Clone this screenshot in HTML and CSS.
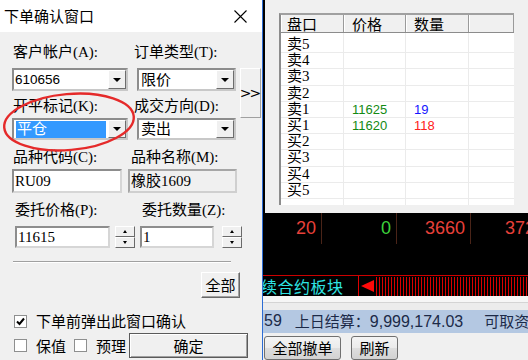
FILE: index.html
```html
<!DOCTYPE html>
<html lang="zh-CN">

<head>
    <meta charset="UTF-8">
    <meta name="viewport" content="width=device-width">
    <title>下单确认窗口</title>
    <link rel="stylesheet" href="styles.css">
</head>

<body>
    <div class="dlg">
        <div class="titlebar">
            <span>下单确认窗口</span>
            <svg class="close" width="13" height="13" viewBox="0 0 13 13">
                <path d="M0.5 0.5 L12.5 12.5 M12.5 0.5 L0.5 12.5" stroke="#000" stroke-width="1.1" fill="none" />
            </svg>
        </div>
        <div class="pane">
            <!-- les deux lignes de listes + le bouton >> -->
            <div class="top">
                <label class="l1">客户帐户(A):</label>
                <label class="l2">订单类型(T):</label>
                <div class="combo s1"><span class="num">610656</span><i class="drop"></i></div>
                <div class="combo s2"><span>限价</span><i class="drop"></i></div>
                <div class="btn more">&gt;&gt;</div>
                <label class="l3">开平标记(K):</label>
                <label class="l4">成交方向(D):</label>
                <div class="combo s3"><span class="sel">平仓</span><i class="drop"></i></div>
                <div class="combo s4"><span>卖出</span><i class="drop"></i></div>
            </div>

            <div class="lbl-row r3">
                <label class="w117">品种代码(C):</label>
                <label>品种名称(M):</label>
            </div>
            <div class="in-row r3i">
                <div class="box w110">RU09</div>
                <div class="box ro w109">橡胶1609</div>
            </div>

            <div class="lbl-row r4">
                <label class="w127">委托价格(P):</label>
                <label>委托数量(Z):</label>
            </div>
            <div class="in-row r4i">
                <div class="box price">11615</div>
                <div class="spin"><i class="spb up"></i><i class="spb down"></i></div>
                <div class="box qty">1</div>
                <div class="spin"><i class="spb up"></i><i class="spb down"></i></div>
            </div>

            <div class="sep"></div>
            <div class="btn all">全部</div>

            <div class="chk-row">
                <span class="chk on">
                    <svg width="11" height="11" viewBox="0 0 11 11">
                        <path d="M2 5.5 L4.5 8 L9 2.5" stroke="#000" stroke-width="2" fill="none" />
                    </svg>
                </span>
                <span class="txt">下单前弹出此窗口确认</span>
            </div>
            <div class="last-row">
                <span class="chk"></span>
                <span class="txt">保值</span>
                <span class="chk c2"></span>
                <span class="txt">预理</span>
                <div class="btn ok">确定</div>
            </div>
        </div>

        <!-- le cercle rouge par-dessus -->
        <svg class="ring" width="144" height="72" viewBox="0 0 144 72">
            <ellipse cx="69" cy="34" rx="65" ry="28" transform="rotate(-5 69 34)" fill="none" stroke="#e52a2a"
                stroke-width="2.4" />
        </svg>
    </div>

    <div class="side">
        <div class="quote">
            <div class="book">
                <div class="bhead"><span>盘口</span><span>价格</span><span>数量</span><span></span></div>
                <div class="bbody">
                    <div class="brow"><span>卖5</span><span></span><span></span><span></span></div>
                    <div class="brow"><span>卖4</span><span></span><span></span><span></span></div>
                    <div class="brow"><span>卖3</span><span></span><span></span><span></span></div>
                    <div class="brow"><span>卖2</span><span></span><span></span><span></span></div>
                    <div class="brow"><span>卖1</span><span class="px">11625</span><span class="px blue">19</span><span></span></div>
                    <div class="brow"><span>买1</span><span class="px">11620</span><span class="px red">118</span><span></span></div>
                    <div class="brow"><span>买2</span><span></span><span></span><span></span></div>
                    <div class="brow"><span>买3</span><span></span><span></span><span></span></div>
                    <div class="brow"><span>买4</span><span></span><span></span><span></span></div>
                    <div class="brow"><span>买5</span><span></span><span></span><span></span></div>
                </div>
            </div>
        </div>

        <div class="ticker">
            <div class="cells">
                <span class="c w59 dn">20</span>
                <span class="c w75 eq">0</span>
                <span class="c w74 dn">3660</span>
                <span class="c last dn">372</span>
            </div>
        </div>

        <div class="bar">
            <span class="blk">续合约板块</span>
            <span class="scroll"><i class="tri"></i><span class="stripes"></span></span>
        </div>

        <div class="edge"></div>

        <div class="status">
            <span class="n">59</span>
            <span class="settle">上日结算：<span class="n">9,999,174.03</span></span>
            <span class="avail">可取资</span>
        </div>

        <div class="actions">
            <div class="wbtn b1">全部撤单</div>
            <div class="wbtn b2">刷新</div>
        </div>
    </div>
</body>

</html>
```

FILE: styles.css
```css
* {
    box-sizing: border-box;
}

body {
    margin: 0;
    width: 528px;
    height: 360px;
    overflow: hidden;
    display: flex;
    background: #000;
    font-family: "Liberation Serif", "Noto Sans CJK SC", serif;
    font-size: 15px;
    line-height: 16px;
    color: #000;
}

/*********************/
/* La fenêtre de gauche */
/*********************/
.dlg {
    position: relative;
    flex: none;
    width: 263px;
    border-right: 1px solid #2c6cd4;
    background: #f0f0f0;
}

.titlebar {
    height: 32px;
    display: flex;
    align-items: center;
    padding-left: 4px;
    background: #fff;
    font-family: "Noto Sans CJK SC", sans-serif;
    font-size: 15px;
}

.titlebar .close {
    margin-left: auto;
    margin-right: 15px;
}

.pane {
    padding: 12px 0 0 12px;
}

.top {
    display: grid;
    grid-template-columns: 116px 9px 99px 4px 21px;
    grid-template-rows: 24px 23px 27px 22px;
    grid-template-areas:
        "l1 . l2 . ."
        "s1 . s2 . more"
        "l3 . l4 . more"
        "s3 . s4 . .";
}

.l1 { grid-area: l1; margin-left: 1px; }
.l2 { grid-area: l2; margin-left: -3px; white-space: nowrap; }
.l3 { grid-area: l3; margin-left: 1px; padding-top: 7px; }
.l4 { grid-area: l4; margin-left: -3px; padding-top: 7px; white-space: nowrap; }
.s1 { grid-area: s1; }
.s2 { grid-area: s2; }
.s3 { grid-area: s3; }
.s4 { grid-area: s4; }
.more { grid-area: more; }

label {
    white-space: nowrap;
}

/* liste déroulante façon Windows */
.combo {
    display: flex;
    align-items: center;
    background: #fff;
    border: 2px solid;
    border-color: #8d8d8d #c8c8c8 #c8c8c8 #8d8d8d;
    padding-left: 2px;
}

.combo > span {
    flex: 1;
}

.combo .num {
    margin-left: -1px;
    font-family: "Liberation Sans", sans-serif;
    font-size: 13.5px;
}

.combo .sel {
    flex: 0 0 90px;
    height: 17px;
    margin-right: auto;
    padding-left: 1px;
    background: #3399ff;
    color: #fff;
    line-height: 17px;
}

.drop {
    width: 18px;
    align-self: stretch;
    display: flex;
    align-items: center;
    justify-content: center;
    background: #f0f0f0;
    border: 1px solid;
    border-color: #fff #6d6d6d #6d6d6d #fff;
}

.drop::after {
    content: '';
    border-left: 4px solid transparent;
    border-right: 4px solid transparent;
    border-top: 4px solid #000;
}

/* bouton en relief */
.btn {
    display: flex;
    align-items: center;
    justify-content: center;
    background: #f0f0f0;
    border: 1px solid;
    border-color: #fff #6a6a6a #6a6a6a #fff;
    box-shadow: inset -1px -1px #a0a0a0;
    font-family: "Noto Sans CJK SC", sans-serif;
}

.more {
    font-family: "DejaVu Sans", sans-serif;
    font-size: 14px;
    letter-spacing: -2px;
    padding-right: 2px;
    border-color: #fff #a0a0a0 #a0a0a0 #fff;
    box-shadow: none;
}

.lbl-row {
    display: flex;
    height: 16px;
    margin-top: 9px;
}

.w117 { width: 118px; margin-left: 1px; }
.w127 { width: 127px; margin-left: 3px; }

.in-row {
    display: flex;
}

.r3i {
    height: 24px;
    margin-top: 4px;
}

.r4i {
    height: 22px;
    margin-top: 8px;
}

.box {
    display: flex;
    align-items: center;
    padding-left: 1px;
    background: #fff;
    border: 2px solid;
    border-color: #8d8d8d #d6d6d6 #d6d6d6 #8d8d8d;
}

.box.ro {
    background: #f0f0f0;
    border-color: #a6a6a6 #cfcfcf #cfcfcf #a6a6a6;
}

.w110 { width: 110px; }
.w109 { width: 109px; margin-left: 6px; }

.price { width: 95px; margin-left: 3px; }
.qty { width: 74px; margin-left: 5px; }

.spin {
    width: 20px;
    margin-left: 5px;
    display: flex;
    flex-direction: column;
}

.qty + .spin {
    margin-left: 8px;
}

.spb {
    flex: 1;
    display: flex;
    align-items: center;
    justify-content: center;
    background: #f0f0f0;
    border: 1px solid;
    border-color: #fff #6a6a6a #6a6a6a #fff;
}

.spb::after {
    content: '';
    border-left: 2.5px solid transparent;
    border-right: 2.5px solid transparent;
}

.spb.up::after { border-bottom: 3px solid #000; }
.spb.down::after { border-top: 3px solid #000; }

.sep {
    width: 218px;
    margin: 13px 0 0 1px;
    border-top: 1px solid #a0a0a0;
    border-bottom: 1px solid #fff;
}

.all {
    width: 39px;
    height: 26px;
    margin: 9px 0 0 189px;
}

.chk-row {
    display: flex;
    align-items: center;
    height: 14px;
    margin-top: 16px;
}

.last-row {
    display: flex;
    align-items: center;
    height: 25px;
    margin-top: 5px;
}

.chk {
    width: 13px;
    height: 13px;
    margin-left: 2px;
    display: flex;
    align-items: center;
    justify-content: center;
    background: #fff;
    border: 1px solid #8e8f8f;
}

.chk.c2 { margin-left: 8px; }

.txt {
    margin-left: 9px;
    font-family: "Noto Sans CJK SC", sans-serif;
    white-space: nowrap;
}

.ok {
    width: 119px;
    height: 25px;
    margin-left: 3px;
    border: 1px solid #5a5a5a;
    box-shadow: inset 1px 1px #fff, inset -1px -1px #a0a0a0;
}

.ring {
    position: absolute;
    left: 0;
    top: 88px;
}

/*********************/
/* Partie de droite */
/*********************/
.side {
    flex: 1;
    min-width: 0;
    display: flex;
    flex-direction: column;
    overflow: hidden;
    background: #000;
}

.quote {
    height: 218px;
    margin-left: 2px;
    padding: 13px 0 0 14px;
    background: #f0f0f0;
}

.book {
    width: 235px;
    border-left: 2px solid #8c8c8c;
    border-top: 2px solid #a0a0a0;
}

.bhead,
.brow {
    display: grid;
    grid-template-columns: 63px 62px 63px 1fr;
}

.bhead {
    height: 18px;
    background: #f0f0f0;
    border-bottom: 1px solid #8c8c8c;
    font-family: "Noto Sans CJK SC", sans-serif;
}

.bhead span {
    padding-left: 7px;
    border-left: 1px solid #fff;
    border-right: 1px solid #9a9a9a;
    line-height: 17px;
}

.bhead span:first-child {
    padding-left: 5px;
}

.bbody {
    height: 172px;
    padding-top: 4px;
    background:
        linear-gradient(#ebebeb, #ebebeb) 62px 0 / 1px 100% no-repeat,
        linear-gradient(#ebebeb, #ebebeb) 124px 0 / 1px 100% no-repeat,
        linear-gradient(#ebebeb, #ebebeb) 187px 0 / 1px 100% no-repeat,
        #fff;
}

.brow {
    height: 16.2px;
    border-bottom: 1px solid #ebebeb;
    align-items: center;
}

.brow span {
    padding-left: 8px;
    line-height: 15px;
}

.brow span:first-child {
    padding-left: 6px;
}

.brow .px {
    font-family: "Liberation Sans", sans-serif;
    font-size: 13px;
    color: #138a13;
}

.brow .blue { color: #1414ff; }
.brow .red { color: #ff2020; }

/* la grille noire */
.ticker {
    height: 63px;
}

.cells {
    display: flex;
    height: 31px;
}

.c {
    flex: none;
    padding-right: 5px;
    border-right: 1px solid #4a2418;
    text-align: right;
    font-family: "Liberation Sans", sans-serif;
    font-size: 18px;
    line-height: 31px;
}

.w59 { width: 59px; }
.w75 { width: 75px; }
.w74 { width: 74px; }
.last { width: 80px; padding-right: 0; text-align: left; padding-left: 34px; border: none; }
.dn { color: #e8403a; }
.eq { color: #3cd23c; }

.bar {
    height: 21px;
    display: flex;
    border-top: 1px solid #cc0000;
}

.blk {
    flex: none;
    width: 95px;
    overflow: hidden;
    white-space: nowrap;
    text-indent: -2px;
    color: #2ee4e4;
    font-family: "Noto Sans CJK SC", sans-serif;
    font-size: 16px;
    letter-spacing: 0.5px;
    line-height: 20px;
}

.scroll {
    flex: 1;
    display: flex;
    align-items: center;
    border-left: 1px solid #e00000;
}

.tri {
    margin-left: 2px;
    border-top: 6.5px solid transparent;
    border-bottom: 6.5px solid transparent;
    border-right: 13px solid #ff0a0a;
}

.stripes {
    flex: 1;
    align-self: stretch;
    margin: 1px 0 0 2px;
    background: repeating-linear-gradient(90deg, #d80000 0 1px, #000 1px 3px);
}

.edge {
    height: 14px;
    background: linear-gradient(#f6f6f6 0 6px, #d4d4d4 6px 7px, #ececec 7px);
}

.status {
    height: 24px;
    display: flex;
    align-items: center;
    padding-left: 1px;
    background: #b4c8e2;
    color: #1c2a48;
    font-family: "Noto Sans CJK SC", sans-serif;
    font-size: 15px;
    white-space: nowrap;
}

.status .n {
    font-family: "Liberation Sans", sans-serif;
    font-size: 16px;
}

.settle { margin-left: 13px; }
.avail { margin-left: 21px; }

.actions {
    flex: 1;
    display: flex;
    padding-top: 3px;
    background: #f0f0f0;
}

.wbtn {
    height: 24px;
    display: flex;
    align-items: center;
    justify-content: center;
    border: 1px solid #707070;
    border-radius: 3px;
    background: linear-gradient(#f4f4f4, #ebebeb 50%, #dedede 50%, #d2d2d2);
    font-family: "Noto Sans CJK SC", sans-serif;
    font-size: 15px;
}

.b1 { width: 77px; margin-left: 1px; }
.b2 { width: 47px; margin-left: 10px; }
```
